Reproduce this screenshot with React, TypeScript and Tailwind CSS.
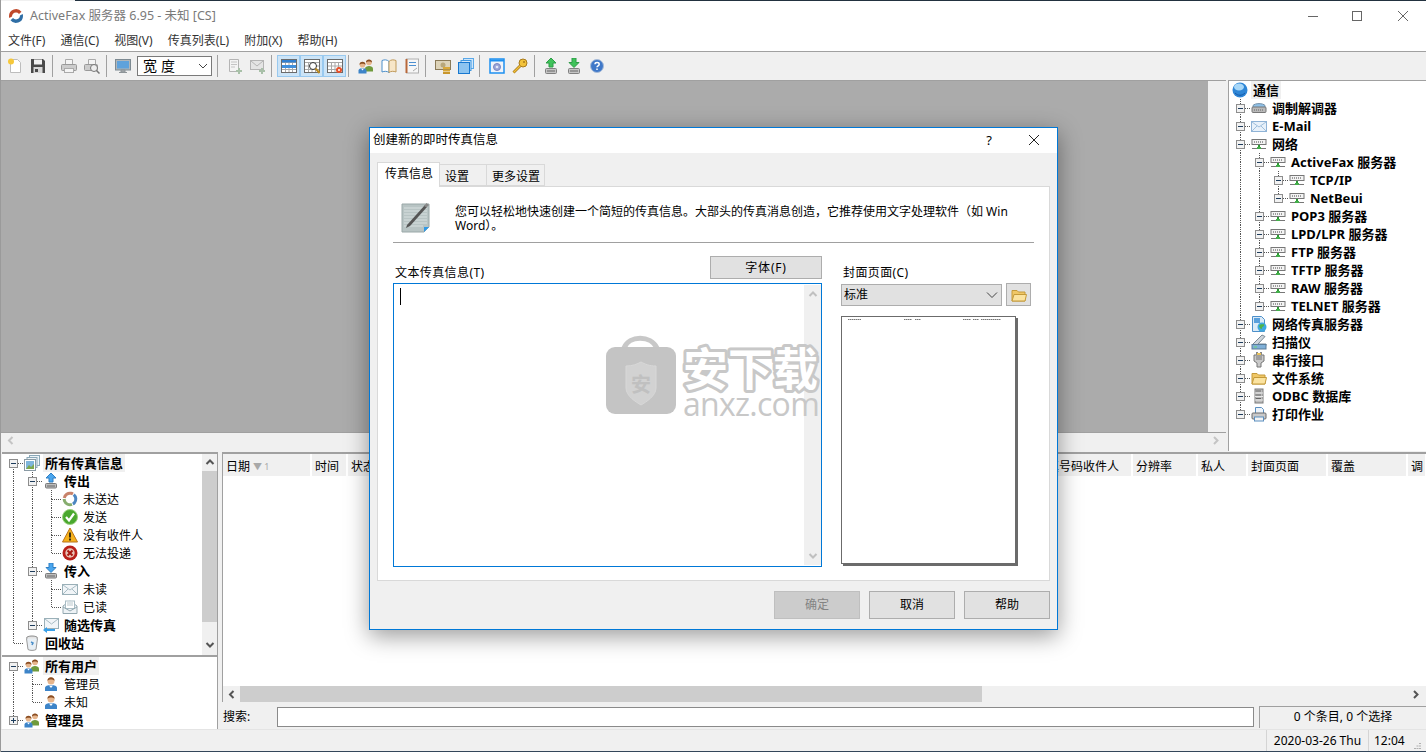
import React from "react";

const Ic: React.FC<{ children: React.ReactNode; size?: number; className?: string }> = ({ children, size = 16, className }) => (
  <svg width={size} height={size} viewBox="0 0 16 16" className={"shrink-0 " + (className ?? "")}>
    {children}
  </svg>
);

const Logo = () => (
  <svg width="16" height="16" viewBox="0 0 16 16" className="shrink-0">
    <path d="M1 8a7 7 0 0 1 12.5-4.3L11 6a4 4 0 0 0-3-1.4C5.500 4.600 4 6.500 4 8.500L1.300 10A7 7 0 0 1 1 8z" fill="#c0492b" />
    <path d="M15 8a7 7 0 0 1-12.500 4.300L5 10a4 4 0 0 0 3 1.400c2.500 0 4-1.900 4-3.900L14.700 6A7 7 0 0 1 15 8z" fill="#2f6ea5" />
  </svg>
);

const Globe = () => (
  <Ic>
    <circle cx="8" cy="8" r="7.500" fill="#2f86d6" />
    <ellipse cx="7" cy="5" rx="5" ry="3.500" fill="#a9d8f8" />
    <path d="M3 11c3 3 7 3 10 0" stroke="#1559a8" fill="none" />
  </Ic>
);
const Modem = () => (
  <Ic>
    <path d="M2 5.500C4 3 12 3 14 5.500V12H2z" fill="#8fc1e8" stroke="#6f8ea8" />
    <rect x="1" y="7" width="14" height="5.500" rx="1" fill="#b9b9b9" stroke="#777" />
    <path d="M3 10h10" stroke="#666" strokeDasharray="1 1" />
  </Ic>
);
const Mail = () => (
  <Ic>
    <rect x="0.500" y="3.500" width="15" height="10" fill="#e8f1fa" stroke="#8fb3d6" />
    <path d="M1 4l7 5 7-5M1 13l5-5M15 13l-5-5" stroke="#9fbfdc" fill="none" />
  </Ic>
);
const Net = () => (
  <Ic>
    <rect x="1" y="3.500" width="14" height="5" fill="#f4f4f4" stroke="#777" />
    <path d="M3 6h10" stroke="#444" strokeDasharray="1 1" />
    <path d="M8 9v3" stroke="#2e9a36" strokeWidth="2" />
    <path d="M1 12.500h14" stroke="#777" />
    <rect x="6" y="11" width="4" height="2" fill="#43b04a" />
  </Ic>
);
const NetFax = () => (
  <Ic>
    <path d="M1.500 0.500h9l3 3v12h-12z" fill="#dbeaf7" stroke="#4c8fc9" />
    <rect x="3" y="2" width="6" height="5" fill="#5aa0dc" />
    <circle cx="11" cy="11" r="4.500" fill="#3fa9e0" />
    <path d="M8 10c2-3 4-1 5-2 1 3-2 2-2 4 0 2-2 1-3-2z" fill="#4fb348" />
  </Ic>
);
const Scanner = () => (
  <Ic>
    <path d="M1 11L11 1l3 1.500L7 10h8v1.500z" fill="#cfd6dc" stroke="#7b8a96" />
    <rect x="1" y="10.500" width="14" height="4.500" fill="#7fb0d8" stroke="#5a7d9a" />
    <path d="M3 13h3" stroke="#6fdc6f" />
  </Ic>
);
const Serial = () => (
  <Ic>
    <path d="M3 3h10v6l-3 2v4H6v-4L3 9z" fill="#c9c9c9" stroke="#777" />
    <path d="M6 0v3M10 0v3" stroke="#888" strokeWidth="2" />
    <path d="M5 5h6M5 7h6" stroke="#777" />
    <rect x="6" y="1" width="4" height="2" fill="#e8c25a" />
  </Ic>
);
const Folder = () => (
  <Ic>
    <path d="M1 3.500h5l1.500 1.500H14v9H1z" fill="#f0c766" stroke="#c49a3a" />
    <path d="M1 14l2-6.500h12.500L14 14z" fill="#fbe3a0" stroke="#c49a3a" />
  </Ic>
);
const Db = () => (
  <Ic>
    <rect x="4" y="1" width="8" height="14" fill="#bdbdbd" stroke="#7d7d7d" />
    <path d="M4 5h8M4 8.500h8M4 12h8" stroke="#e8e8e8" />
    <path d="M5 3h5M5 7h5M5 10.500h5" stroke="#666" />
  </Ic>
);
const Printer = () => (
  <Ic>
    <path d="M4.500 1.500h6l2 2v4h-8z" fill="#eef4fa" stroke="#5b8fc0" />
    <rect x="1" y="7" width="14" height="6" rx="1" fill="#c9c9c9" stroke="#6b6b6b" />
    <rect x="3.500" y="11" width="9" height="4" fill="#f4f4f4" stroke="#5b8fc0" />
  </Ic>
);
const Out = () => (
  <Ic>
    <path d="M8 0l5 5h-3v4H6V5H3z" fill="#4aa6ee" stroke="#2f7fc4" />
    <rect x="2.500" y="10.500" width="11" height="4.500" rx="1" fill="#bdbdbd" stroke="#7a7a7a" />
    <path d="M4 13h8" stroke="#666" />
  </Ic>
);
const In = () => (
  <Ic>
    <path d="M8 9.500l5-5h-3V0H6v4.500H3z" fill="#4aa6ee" stroke="#2f7fc4" />
    <rect x="2.500" y="10.500" width="11" height="4.500" rx="1" fill="#bdbdbd" stroke="#7a7a7a" />
    <path d="M4 13h8" stroke="#666" />
  </Ic>
);
const Cycle = () => (
  <Ic>
    <g fill="none" strokeWidth="3" transform="rotate(-170 8 8)">
      <circle cx="8" cy="8" r="5.800" stroke="#c8826a" strokeDasharray="11 25.500" />
    </g>
    <g fill="none" strokeWidth="3" transform="rotate(-50 8 8)">
      <circle cx="8" cy="8" r="5.800" stroke="#4c86c0" strokeDasharray="11 25.500" />
    </g>
    <g fill="none" strokeWidth="3" transform="rotate(70 8 8)">
      <circle cx="8" cy="8" r="5.800" stroke="#86ad6e" strokeDasharray="11 25.500" />
    </g>
  </Ic>
);
const Check = () => (
  <Ic>
    <circle cx="8" cy="8" r="7.500" fill="#4aa82e" />
    <circle cx="8" cy="8" r="7.500" fill="none" stroke="#9ad07e" />
    <path d="M4 8l3 3.500L12 4.500" stroke="#fff" strokeWidth="2.200" fill="none" />
  </Ic>
);
const Warn = () => (
  <Ic>
    <path d="M8 1L15.500 15H.5z" fill="#f6b21b" stroke="#b8731a" />
    <path d="M8 5.500v5M8 11.500v2" stroke="#111" strokeWidth="1.600" />
  </Ic>
);
const Err = () => (
  <Ic>
    <circle cx="8" cy="8" r="7.500" fill="#b8201a" />
    <circle cx="8" cy="8" r="4.700" fill="#e8c4b8" />
    <path d="M5.500 5.500l5 5M10.500 5.500l-5 5" stroke="#a8180f" strokeWidth="2" />
  </Ic>
);
const MailGray = () => (
  <Ic>
    <rect x="0.500" y="3.500" width="15" height="10" fill="#f1f5f8" stroke="#9ab0b8" />
    <path d="M1 4l7 5 7-5M1 13l5-5M15 13l-5-5" stroke="#a8bcc4" fill="none" />
  </Ic>
);
const MailOpen = () => (
  <Ic>
    <path d="M1 7l7-5 7 5v7.500H1z" fill="#eef3f6" stroke="#93a8b0" />
    <rect x="3.500" y="2" width="9" height="7.500" fill="#fff" stroke="#a8bcc4" />
    <path d="M5 4h6M5 6h6" stroke="#b9c7cc" />
    <path d="M1 8l7 4 7-4" fill="none" stroke="#93a8b0" />
  </Ic>
);
const MailArrow = () => (
  <Ic>
    <rect x="1.500" y="1.500" width="14" height="10" fill="#f1f5f8" stroke="#9ab0b8" />
    <path d="M2 2l6.500 5L15 2" stroke="#a8bcc4" fill="none" />
    <path d="M0 13l4-3v2h8v2H4v2z" fill="#39a0e8" />
  </Ic>
);
const Bin = () => (
  <Ic>
    <ellipse cx="8" cy="3" rx="5.500" ry="2" fill="#e4e4e4" stroke="#8a8a8a" />
    <path d="M2.500 3.500l1.500 11c2 1.200 6 1.200 8 0l1.500-11" fill="#e9eff4" stroke="#9a9a9a" />
    <path d="M7 7l2 1-1 2" stroke="#4c8fc9" fill="none" strokeWidth="1.500" />
  </Ic>
);
const User = () => (
  <Ic>
    <path d="M2 15v-3c0-2 2.500-3 6-3s6 1 6 3v3z" fill="#3d84c8" />
    <path d="M6 9.500h4L8 12z" fill="#fff" />
    <circle cx="8" cy="5" r="3.500" fill="#e6b58c" />
    <path d="M4.500 5c-.500-5 7.500-5 7 0-1-2-6-2-7 0z" fill="#8a4d22" />
  </Ic>
);
const Users = () => (
  <Ic>
    <path d="M7 13.500v-3c0-1.500 2-2.500 4-2.500s4 1 4 2.500v3z" fill="#6f9a3c" />
    <circle cx="11" cy="4.500" r="2.800" fill="#e6b58c" />
    <path d="M8 4.500c-.400-4 6.400-4 6 0-1-1.500-5-1.500-6 0z" fill="#8a4d22" />
    <path d="M0.500 15.500v-3c0-1.500 2-2.500 4-2.500s4 1 4 2.500v3z" fill="#3d84c8" />
    <path d="M3 10.500h3L4.500 12.500z" fill="#fff" />
    <circle cx="4.500" cy="6.800" r="2.800" fill="#e6b58c" />
    <path d="M1.500 6.800c-.400-4 6.400-4 6 0-1-1.500-5-1.500-6 0z" fill="#8a4d22" />
  </Ic>
);
const AllFax = () => (
  <Ic>
    <rect x="5.500" y="0.500" width="10" height="10" fill="#eef4f8" stroke="#8aa8b8" />
    <rect x="3" y="2.500" width="10" height="10" fill="#eef4f8" stroke="#8aa8b8" />
    <rect x="0.500" y="4.500" width="11" height="11" fill="#fff" stroke="#8a9aa4" />
    <path d="M2 6h8v8H2z" fill="#7fb6dc" />
    <path d="M2 14l3-4 2 2 3-3v5z" fill="#7da84e" />
  </Ic>
);
const NewDoc = () => (
  <Ic>
    <path d="M3.500 1.500h7l3 3v10h-10z" fill="#fff" stroke="#bdbdbd" />
    <circle cx="4" cy="3.500" r="3" fill="#f6c83a" />
  </Ic>
);
const Save = () => (
  <Ic>
    <path d="M1 1h12l2 2v12H1z" fill="#4a4a4a" />
    <rect x="4" y="1.500" width="8" height="5" fill="#f2f2f2" />
    <rect x="3.500" y="9" width="9" height="6" fill="#d8d8d8" />
    <rect x="5" y="11" width="3" height="3" fill="#4a4a4a" />
  </Ic>
);
const PrintGray = () => (
  <Ic>
    <path d="M4.500 1.500h7v5h-7z" fill="#f4f4f4" stroke="#aaa" />
    <rect x="0.500" y="6.500" width="15" height="6" rx="1" fill="#ccc" stroke="#999" />
    <rect x="3.500" y="10.500" width="9" height="4" fill="#f4f4f4" stroke="#aaa" />
  </Ic>
);
const PreviewGray = () => (
  <Ic>
    <path d="M4.500 1.500h7v5h-7z" fill="#f4f4f4" stroke="#aaa" />
    <rect x="0.500" y="6.500" width="13" height="6" rx="1" fill="#ccc" stroke="#999" />
    <circle cx="10" cy="10" r="3.500" fill="#eee" stroke="#777" />
    <path d="M12.500 12.500l3 3" stroke="#777" strokeWidth="1.500" />
  </Ic>
);
const Monitor = () => (
  <Ic>
    <rect x="0.500" y="1.500" width="15" height="10.500" fill="#b0b6ba" stroke="#7d8a92" />
    <rect x="2" y="3" width="12" height="7.500" fill="#5fa2dc" />
    <path d="M6 12h4v2H6zM4 14.500h8" fill="#a8adb0" stroke="#8d9498" />
  </Ic>
);
const AddDoc = () => (
  <Ic>
    <path d="M2.500 1.500h9v12h-9z" fill="#f4f4f4" stroke="#b4b4b4" />
    <path d="M4 4h6M4 6.500h6M4 9h4" stroke="#c4c4c4" />
    <path d="M12 10v6M9 13h6" stroke="#a8c0a8" strokeWidth="2" />
  </Ic>
);
const AddMail = () => (
  <Ic>
    <rect x="0.500" y="2.500" width="13" height="9" fill="#e4e4e4" stroke="#b4b4b4" />
    <path d="M1 3l6 5 6-5" stroke="#b4b4b4" fill="none" />
    <path d="M12 10v6M9 13h6" stroke="#a8c0a8" strokeWidth="2" />
  </Ic>
);
const Grid = ({ children }: { children?: React.ReactNode }) => (
  <Ic>
    <rect x="0.500" y="1.500" width="15" height="13" fill="#fff" stroke="#6b6b6b" />
    <path d="M1 4.500h14M1 8h14M1 11.500h14M4.500 4v10M8 4v10M11.500 4v10" stroke="#a8a8a8" />
    {children}
  </Ic>
);
const GridBlue = () => (
  <Grid>
    <rect x="1" y="2" width="14" height="2.500" fill="#2f7fd0" />
    <rect x="1" y="7" width="14" height="3" fill="#3f8fdc" />
  </Grid>
);
const GridSearch = () => (
  <Grid>
    <circle cx="9" cy="8" r="3.500" fill="#fff" stroke="#333" />
    <path d="M11.500 10.500l4 4.500" stroke="#b98a22" strokeWidth="2" />
  </Grid>
);
const GridGear = () => (
  <Grid>
    <circle cx="12" cy="12" r="3" fill="#e8502a" />
    <circle cx="12" cy="12" r="1" fill="#fff" />
  </Grid>
);
const Book = () => (
  <Ic>
    <path d="M1 2.500c2.500-1 5-1 7 1v11c-2-1.500-4.500-1.500-7-.500z" fill="#fff" stroke="#4c8fc9" />
    <path d="M15 2.500c-2.500-1-5-1-7 1v11c2-1.500 4.500-1.500 7-.500z" fill="#f7e6c8" stroke="#c09a5a" />
  </Ic>
);
const Notes = () => (
  <Ic>
    <rect x="2.500" y="1" width="12" height="14" fill="#f6f6f6" stroke="#b0b0b0" />
    <path d="M2.500 1v14" stroke="#b8683a" strokeWidth="2" />
    <path d="M5 4.500h7M5 7.500h7" stroke="#4c8fd0" />
    <path d="M9 13l4-3" stroke="#aaa" />
  </Ic>
);
const Money = () => (
  <Ic>
    <rect x="0.500" y="2.500" width="15" height="9" fill="#ddd3b8" stroke="#8a7a58" />
    <circle cx="8" cy="7" r="2.500" fill="#b8a77a" />
    <rect x="8" y="9" width="7" height="2" fill="#d9a838" />
    <rect x="8" y="11.500" width="7" height="2" fill="#d9a838" />
    <rect x="8" y="14" width="7" height="2" fill="#c8962c" />
  </Ic>
);
const Copies = () => (
  <Ic>
    <rect x="5.500" y="0.500" width="10" height="10" fill="#cfe6fa" stroke="#5aa8e8" />
    <rect x="3" y="2.500" width="10" height="10" fill="#cfe6fa" stroke="#3f98e0" />
    <rect x="0.500" y="4.500" width="11" height="11" fill="#8cc4f0" stroke="#1778d0" />
  </Ic>
);
const GearWin = () => (
  <Ic>
    <rect x="1" y="1" width="14" height="14" fill="#f0f4fa" stroke="#1e90f0" strokeWidth="1.500" />
    <path d="M1 2.500h14" stroke="#1e90f0" strokeWidth="2" />
    <circle cx="8" cy="9" r="3.500" fill="#9aa4d8" stroke="#7a86c0" />
    <circle cx="8" cy="9" r="1.300" fill="#e4e8f6" />
  </Ic>
);
const Key = () => (
  <Ic>
    <circle cx="11" cy="5" r="4" fill="#f2c23a" stroke="#a87a1c" />
    <circle cx="12" cy="4" r="1" fill="#a87a1c" />
    <path d="M8 8l-6.500 6.500" stroke="#a87a1c" strokeWidth="2.800" />
    <path d="M8 8l-6.500 6.500" stroke="#f2c23a" strokeWidth="1.200" />
  </Ic>
);
const UpBox = () => (
  <Ic>
    <path d="M8 0l5 5h-3v4H6V5H3z" fill="#3fc25a" stroke="#2d9c46" />
    <rect x="2.500" y="10.500" width="11" height="5" rx="1" fill="#c4c4c4" stroke="#808080" />
    <path d="M4 13h8" stroke="#666" />
  </Ic>
);
const DownBox = () => (
  <Ic>
    <path d="M8 9.500l5-5h-3V0H6v4.500H3z" fill="#3fc25a" stroke="#2d9c46" />
    <rect x="2.500" y="10.500" width="11" height="5" rx="1" fill="#c4c4c4" stroke="#808080" />
    <path d="M4 13h8" stroke="#666" />
  </Ic>
);
const HelpIc = () => (
  <svg width="14" height="14" viewBox="0 0 14 14" className="shrink-0">
    <circle cx="7" cy="7" r="6.500" fill="#3f78c8" stroke="#a8bcd8" />
    <path d="M5 5.300c0-2.300 4.200-2.300 4.200 0 0 1.600-2.200 1.500-2.200 3" stroke="#fff" strokeWidth="1.500" fill="none" />
    <path d="M7 9.500v1.500" stroke="#fff" strokeWidth="1.500" />
  </svg>
);
const PenNote = () => (
  <svg width="30" height="32" viewBox="0 0 30 32" className="shrink-0">
    <path d="M1 3h27v23l-5 5H1z" fill="#b8c4c4" stroke="#9aa8a8" />
    <path d="M3 7h23M3 10h23M3 13h23M3 16h23M3 19h23M3 22h23M3 25h19" stroke="#d8e0e0" />
    <path d="M23 31l5-5h-5z" fill="#2f9ae8" />
    <path d="M6 24L24 4l2 2L9 25l-4 2z" fill="#555" />
    <path d="M23 5l2.500-3L28 4l-2.500 2.500z" fill="#888" />
  </svg>
);

const Chevron: React.FC<{ dir: "up" | "down" | "left" | "right"; className?: string }> = ({ dir, className }) => {
  const d = { up: "M1.500 6L5 2.500 8.500 6", down: "M1.500 3L5 6.500 8.500 3", left: "M6.500 1L3 4.500 6.500 8", right: "M3 1L6.500 4.500 3 8" }[dir];
  return (
    <svg width="10" height="9" viewBox="0 0 10 9" className={"shrink-0 " + (className ?? "")}>
      <path d={d} fill="none" stroke="currentColor" strokeWidth="2" />
    </svg>
  );
};

type Conn = "p" | "b" | "tm" | "cm" | "rm" | "t" | "c" | "cp";

const Cell = ({ kind }: { kind: Conn }) => {
  const box = kind === "tm" || kind === "cm" || kind === "rm" || kind === "cp";
  const vTop = kind !== "rm" && kind !== "b";
  const vBottom = kind === "p" || kind === "tm" || kind === "t" || kind === "rm";
  const hLine = kind !== "p" && kind !== "b";
  return (
    <svg width="19" height="18" viewBox="0 0 19 18" className="shrink-0" shapeRendering="crispEdges">
      {vTop && <path d="M9.500 0V9" stroke="#555" strokeDasharray="1 1" />}
      {vBottom && <path d="M9.500 9V18" stroke="#555" strokeDasharray="1 1" />}
      {hLine && <path d="M10 9.500H20" stroke="#555" strokeDasharray="1 1" />}
      {box && (
        <>
          <rect x="5.500" y="5.500" width="8" height="8" fill="#f2f2f2" stroke="#8d8d8d" />
          <path d="M7 9.500h5" stroke="#1d3c5c" />
          {kind === "cp" && <path d="M9.500 7v5" stroke="#1d3c5c" />}
        </>
      )}
    </svg>
  );
};

type Node = { c: Conn[]; icon: React.ReactNode; label: string; bold?: boolean; sel?: boolean };

const TreeRow = ({ c, icon, label, bold, sel }: Node) => (
  <div className="flex h-[18px] items-center whitespace-nowrap">
    {c.map((k, i) => (
      <Cell key={i} kind={k} />
    ))}
    <span className="ml-px flex w-4 shrink-0 justify-center">{icon}</span>
    <span
      className={
        "ml-[3px] px-[2px] leading-[18px] " +
        (bold ? "text-[13px] font-bold " : "mt-[2px] text-[12px] ") +
        (sel ? "bg-[#f0f0f0]" : "")
      }
    >
      {label}
    </span>
  </div>
);

const rightTree: Node[] = [
  { c: [], icon: <Globe />, label: "通信", bold: true, sel: true },
  { c: ["tm"], icon: <Modem />, label: "调制解调器", bold: true },
  { c: ["tm"], icon: <Mail />, label: "E-Mail", bold: true },
  { c: ["tm"], icon: <Net />, label: "网络", bold: true },
  { c: ["p", "tm"], icon: <Net />, label: "ActiveFax 服务器", bold: true },
  { c: ["p", "p", "tm"], icon: <Net />, label: "TCP/IP", bold: true },
  { c: ["p", "p", "cm"], icon: <Net />, label: "NetBeui", bold: true },
  { c: ["p", "tm"], icon: <Net />, label: "POP3 服务器", bold: true },
  { c: ["p", "tm"], icon: <Net />, label: "LPD/LPR 服务器", bold: true },
  { c: ["p", "tm"], icon: <Net />, label: "FTP 服务器", bold: true },
  { c: ["p", "tm"], icon: <Net />, label: "TFTP 服务器", bold: true },
  { c: ["p", "tm"], icon: <Net />, label: "RAW 服务器", bold: true },
  { c: ["p", "cm"], icon: <Net />, label: "TELNET 服务器", bold: true },
  { c: ["tm"], icon: <NetFax />, label: "网络传真服务器", bold: true },
  { c: ["tm"], icon: <Scanner />, label: "扫描仪", bold: true },
  { c: ["tm"], icon: <Serial />, label: "串行接口", bold: true },
  { c: ["tm"], icon: <Folder />, label: "文件系统", bold: true },
  { c: ["tm"], icon: <Db />, label: "ODBC 数据库", bold: true },
  { c: ["cm"], icon: <Printer />, label: "打印作业", bold: true },
];

const faxTree: Node[] = [
  { c: ["rm"], icon: <AllFax />, label: "所有传真信息", bold: true, sel: true },
  { c: ["p", "tm"], icon: <Out />, label: "传出", bold: true },
  { c: ["p", "p", "t"], icon: <Cycle />, label: "未送达" },
  { c: ["p", "p", "t"], icon: <Check />, label: "发送" },
  { c: ["p", "p", "t"], icon: <Warn />, label: "没有收件人" },
  { c: ["p", "p", "c"], icon: <Err />, label: "无法投递" },
  { c: ["p", "tm"], icon: <In />, label: "传入", bold: true },
  { c: ["p", "p", "t"], icon: <MailGray />, label: "未读" },
  { c: ["p", "p", "c"], icon: <MailOpen />, label: "已读" },
  { c: ["p", "cm"], icon: <MailArrow />, label: "随选传真", bold: true },
  { c: ["c"], icon: <Bin />, label: "回收站", bold: true },
];

const userTree: Node[] = [
  { c: ["rm"], icon: <Users />, label: "所有用户", bold: true, sel: true },
  { c: ["p", "t"], icon: <User />, label: "管理员" },
  { c: ["p", "c"], icon: <User />, label: "未知" },
  { c: ["cp"], icon: <Users />, label: "管理员", bold: true },
];

const Sep = ({ className }: { className: string }) => <div className={"h-[22px] w-px shrink-0 bg-[#a0a0a0] " + className} />;

const Tb = ({ children, active, className }: { children: React.ReactNode; active?: boolean; className?: string }) => (
  <div
    className={
      "flex h-[22px] w-[23px] shrink-0 items-center justify-center " +
      (active ? "border border-[#99c9ef] bg-[#cce4f7] " : "") +
      (className ?? "")
    }
  >
    {children}
  </div>
);

const columns = [
  { w: "w-[89px]", t: "日期" },
  { w: "w-[36px]", t: "时间" },
  { w: "w-[653px]", t: "状态" },
  { w: "w-[132px] justify-end pr-[12px]", t: "传真号码收件人" },
  { w: "w-[65px]", t: "分辨率" },
  { w: "w-[50px]", t: "私人" },
  { w: "w-[80px]", t: "封面页面" },
  { w: "w-[80px]", t: "覆盖" },
  { w: "w-[19px]", t: "调" },
];

const DialogBtn = ({ label, disabled }: { label: string; disabled?: boolean }) => (
  <div
    className={
      "flex h-[28px] w-[86px] items-center justify-center border text-[12px] " +
      (disabled ? "border-[#bfbfbf] bg-[#cccccc] text-[#838383]" : "border-[#adadad] bg-[#e1e1e1]")
    }
  >
    {label}
  </div>
);

const Dialog = () => (
  <div className="absolute left-[368px] top-[127px] flex h-[503px] w-[689px] flex-col border border-[#0078d7] bg-[#f0f0f0] shadow-[0_6px_22px_rgba(0,0,0,0.4)]">
    <div className="flex h-[25px] shrink-0 items-center bg-white pb-[2px] pl-[3px] text-[12px]">
      <span className="text-[12.500px]">创建新的即时传真信息</span>
      <span className="ml-auto mr-[36px] text-[13px]">?</span>
      <svg width="12" height="12" viewBox="0 0 12 12" className="mr-[17px]">
        <path d="M1 1l10 10M11 1L1 11" stroke="#222" fill="none" />
      </svg>
    </div>
    <div className="flex h-[33px] shrink-0 items-end pl-[7px] text-[12px]">
      <div className="z-10 -mb-px flex h-[25px] w-[63px] items-center justify-center border border-b-0 border-[#d9d9d9] bg-white pb-[2px] pl-px">传真信息</div>
      <div className="flex h-[22px] w-[47px] items-center border border-l-0 border-[#d9d9d9] pl-[5px] pt-[3px]">设置</div>
      <div className="flex h-[22px] w-[58px] items-center border border-l-0 border-[#d9d9d9] pl-[5px] pt-[3px]">更多设置</div>
    </div>
    <div className="mx-[7px] flex h-[395px] flex-col border border-[#d9d9d9] bg-white px-[15px] text-[12px]">
      <div className="flex h-[56px] shrink-0 items-start border-b border-[#a0a0a0]">
        <div className="ml-[8px] mt-[14px]">
          <PenNote />
        </div>
        <p className="ml-[24px] mt-[18px] w-[580px] leading-[14px]">
          您可以轻松地快速创建一个简短的传真信息。大部头的传真消息创造，它推荐使用文字处理软件（如 Win Word）。
        </p>
      </div>
      <div className="flex min-h-0 flex-1">
        <div className="flex w-[429px] shrink-0 flex-col">
          <div className="flex h-[40px] items-end justify-between pb-[1px]">
            <span className="ml-[2px] leading-[18px] tracking-[0.4px]">文本传真信息(T)</span>
            <div className="mb-[3px] flex h-[23px] w-[112px] items-center justify-center border border-[#adadad] bg-[#e1e1e1] tracking-[0.8px]">字体(F)</div>
          </div>
          <div className="flex h-[284px] border border-[#0078d7] pl-[6px]">
            <div className="mt-[4px] h-[17px] w-px bg-black" />
            <div className="ml-auto my-px flex w-[17px] flex-col items-center justify-between bg-[#f0f0f0] py-[5px] text-[#c0c0c0]">
              <Chevron dir="up" />
              <Chevron dir="down" />
            </div>
          </div>
        </div>
        <div className="ml-[19px] flex w-[190px] flex-col">
          <div className="flex h-[40px] items-end pb-[1px]">
            <span className="ml-[2px] leading-[18px] tracking-[0.4px]">封面页面(C)</span>
          </div>
          <div className="flex items-center">
            <div className="flex h-[22px] w-[161px] items-center justify-between border border-[#adadad] bg-[#e1e1e1] pl-[2px] pr-[3px]">
              标准
              <svg width="12" height="8" viewBox="0 0 12 8">
                <path d="M1 1.500l5 5 5-5" stroke="#444" fill="none" />
              </svg>
            </div>
            <div className="ml-[4px] flex h-[23px] w-[25px] items-center justify-center border border-[#adadad] bg-[#e1e1e1]">
              <Folder />
            </div>
          </div>
          <div className="mt-[10px] h-[248px] w-[175px] border border-[#6b6b6b] bg-white shadow-[2px_2px_0_#6b6b6b]">
            <svg width="173" height="6" viewBox="0 0 173 6" className="block">
              <path d="M6 2.500h13M62 2.500h8M73 2.500h6M121 2.500h8M131 2.500h6M139 2.500h20" stroke="#777" strokeDasharray="1.500 .5" />
            </svg>
          </div>
        </div>
      </div>
    </div>
    <div className="ml-[404px] mt-[10px] flex gap-[9px]">
      <DialogBtn label="确定" disabled />
      <DialogBtn label="取消" />
      <DialogBtn label="帮助" />
    </div>
    <div className="absolute left-[235px] top-[206px] flex items-start">
      <svg width="72" height="82" viewBox="0 0 72 82" className="shrink-0">
        <path d="M19 14C24 1 46 1 52 14" fill="none" stroke="#c8c8c8" strokeWidth="5" />
        <rect x="1" y="13" width="70" height="67" rx="9" fill="#c4c4c4" />
        <path d="M21 32c7 0 11-2 15-4 4 2 8 4 15 4v22c0 8-10 14-15 17-5-3-15-9-15-17z" fill="#d2d2d2" stroke="#d8d8d8" />
        <text x="36" y="58" textAnchor="middle" fontSize="20" fontWeight="700" fill="#c0c0c0" fontFamily="'Noto Sans CJK SC',sans-serif">安</text>
      </svg>
      <div className="ml-[3px] flex flex-col items-center">
        <svg width="142" height="58" viewBox="0 0 142 58" className="shrink-0 overflow-visible">
          <text x="3" y="52" fontSize="45" fontWeight="700" fill="#fff" stroke="#c8c8c8" strokeWidth="6" paintOrder="stroke" strokeLinejoin="round" fontFamily="'Noto Sans CJK SC',sans-serif">安下载</text>
        </svg>
        <span className="font-['Open_Sans',sans-serif] text-[32px] leading-[24px] tracking-[-0.7px] text-[#c8c8c8]">anxz.com</span>
      </div>
    </div>
  </div>
);

export default function App() {
  return (
    <div className="relative flex h-[752px] w-[1426px] flex-col overflow-hidden border-l border-[#9a9a9a] bg-[#f0f0f0] font-['Noto_Sans','Noto_Sans_CJK_SC',sans-serif] text-[12px] leading-[18px] text-black">
      <div className="absolute bottom-0 left-[-1px] top-[335px] z-20 w-px bg-[#33465a]" />
      <div className="ml-[74px] h-px shrink-0 bg-[#22313f]" />
      <div className="flex h-[29px] shrink-0 items-center bg-white pl-[7px] text-[#7a7a7a]">
        <Logo />
        <span className="ml-[6px] text-[12.500px]">ActiveFax 服务器 6.95 - 未知 [CS]</span>
        <svg width="12" height="12" viewBox="0 0 12 12" className="ml-auto">
          <path d="M1 6.500h10" stroke="#666" />
        </svg>
        <svg width="12" height="12" viewBox="0 0 12 12" className="ml-[32px]">
          <rect x="1.500" y="1.500" width="9" height="9" fill="none" stroke="#666" />
        </svg>
        <svg width="12" height="12" viewBox="0 0 12 12" className="ml-[34px] mr-[17px]">
          <path d="M1 1l10 10M11 1L1 11" stroke="#666" fill="none" />
        </svg>
      </div>
      <div className="flex h-[21px] shrink-0 items-center gap-[15px] bg-white pl-[7px] text-[#333]">
        <span>文件(F)</span>
        <span>通信(C)</span>
        <span>视图(V)</span>
        <span>传真列表(L)</span>
        <span>附加(X)</span>
        <span>帮助(H)</span>
      </div>
      <div className="flex h-[29px] shrink-0 items-center border-t border-[#a0a0a0] pl-[2px]">
        <Tb><NewDoc /></Tb>
        <Tb><Save /></Tb>
        <Sep className="ml-[3px]" />
        <Tb className="ml-[4px]"><PrintGray /></Tb>
        <Tb><PreviewGray /></Tb>
        <Sep className="ml-[3px]" />
        <Tb className="ml-[4px]"><Monitor /></Tb>
        <div className="ml-[3px] flex h-[20px] w-[75px] shrink-0 items-center justify-between border border-[#7a7a7a] bg-white pl-[5px] pr-[3px] text-[14px] leading-none tracking-[4px]">
          宽度
          <svg width="10" height="7" viewBox="0 0 10 7">
            <path d="M1 1l4 4 4-4" stroke="#444" fill="none" />
          </svg>
        </div>
        <Sep className="ml-[5px]" />
        <Tb className="ml-[5px]"><AddDoc /></Tb>
        <Tb><AddMail /></Tb>
        <Sep className="ml-[2px]" />
        <Tb active className="ml-[5px]"><GridBlue /></Tb>
        <Tb active><GridSearch /></Tb>
        <Tb active><GridGear /></Tb>
        <Sep className="ml-[2px]" />
        <Tb className="ml-[5px]"><Users /></Tb>
        <Tb><Book /></Tb>
        <Tb><Notes /></Tb>
        <Sep className="ml-[2px]" />
        <Tb className="ml-[5px]"><Money /></Tb>
        <Tb><Copies /></Tb>
        <Sep className="ml-[2px]" />
        <Tb className="ml-[5px]"><GearWin /></Tb>
        <Tb><Key /></Tb>
        <Sep className="ml-[3px]" />
        <Tb className="ml-[4px]"><UpBox /></Tb>
        <Tb><DownBox /></Tb>
        <Tb><HelpIc /></Tb>
      </div>

      <div className="flex h-[371px] shrink-0">
        <div className="flex w-[1225px] shrink-0 flex-col">
          <div className="flex h-[352px] shrink-0">
            <div className="w-[1207px] border-t border-[#a0a0a0] bg-[#ababab]" />
            <div className="flex-1 border-t border-[#a0a0a0] bg-[#f0f0f0]" />
          </div>
          <div className="flex h-[16px] items-center justify-between border-t border-[#a0a0a0] px-[5px] text-[#c4c4c4]">
            <Chevron dir="left" />
            <Chevron dir="right" />
          </div>
        </div>
        <div className="ml-[2px] flex-1 overflow-hidden border-l border-t border-[#a0a0a0] bg-white pl-[2px]">
          {rightTree.map((n, i) => (
            <TreeRow key={i} {...n} />
          ))}
        </div>
      </div>

      <div className="flex h-[278px] shrink-0 pt-px">
        <div className="ml-px flex w-[216px] shrink-0 flex-col border-r border-[#a0a0a0]">
          <div className="flex h-[203px] shrink-0 border-t-2 border-[#a0a0a0] bg-white">
            <div className="w-[200px] overflow-hidden pl-[2px]">
              {faxTree.map((n, i) => (
                <TreeRow key={i} {...n} />
              ))}
            </div>
            <div className="flex flex-1 flex-col bg-[#f0f0f0]">
              <div className="flex h-[17px] items-center justify-center text-[#555]">
                <Chevron dir="up" />
              </div>
              <div className="h-[151px] bg-[#cdcdcd]" />
              <div className="flex flex-1 items-end justify-center pb-[6px] text-[#555]">
                <Chevron dir="down" />
              </div>
            </div>
          </div>
          <div className="flex-1 overflow-hidden border-t-2 border-[#a0a0a0] bg-white pl-[2px]">
            {userTree.map((n, i) => (
              <TreeRow key={i} {...n} />
            ))}
          </div>
        </div>
        <div className="ml-[4px] flex min-w-0 flex-1 flex-col">
          <div className="flex flex-1 flex-col border-l border-t-2 border-[#a0a0a0] bg-white">
            <div className="flex h-[22px] shrink-0 bg-[#f0f0f0]">
              {columns.map((c, i) => (
                <div key={i} className={"flex shrink-0 items-center overflow-hidden whitespace-nowrap border-r-2 border-white pl-[3px] pt-[3px] " + c.w}>
                  {c.t}
                  {i === 0 && <span className="ml-[3px] text-[9px] text-[#a8a8a8]">▼ 1</span>}
                </div>
              ))}
            </div>
            <div className="flex-1" />
            <div className="flex h-[16px] shrink-0 items-center bg-[#f0f0f0] pr-[5px] text-[#555]">
              <div className="flex w-[17px] justify-center">
                <Chevron dir="left" />
              </div>
              <div className="h-full w-[742px] bg-[#cdcdcd]" />
              <Chevron dir="right" className="ml-auto" />
            </div>
          </div>
          <div className="flex h-[27px] shrink-0 items-center pt-[2px]">
            <span className="ml-px w-[54px] shrink-0">搜索:</span>
            <div className="h-[20px] w-[977px] shrink-0 border border-[#8a8a8a] bg-white" />
            <div className="ml-[5px] flex h-[22px] flex-1 items-center justify-center border-l border-t border-[#a0a0a0]">
              0 个条目, 0 个选择
            </div>
          </div>
        </div>
      </div>

      <div className="flex h-[22px] shrink-0 items-center justify-end border-t border-[#e4e4e4] pr-[4px]">
        <div className="flex h-full w-[102px] items-center justify-center border-l border-[#d4d4d4]">2020-03-26 Thu</div>
        <div className="flex h-full w-[46px] items-center justify-start border-l border-[#d4d4d4] pl-[5px]">12:04</div>
        <svg width="8" height="8" viewBox="0 0 8 8" className="mt-[10px]">
          <path d="M6 1v1M3.500 3.500v1M6 3.500v1M1 6v1M3.500 6v1M6 6v1" stroke="#b0b0b0" strokeWidth="2" />
        </svg>
      </div>
      <div className="h-px shrink-0 bg-[#33465a]" />

      <Dialog />
    </div>
  );
}
